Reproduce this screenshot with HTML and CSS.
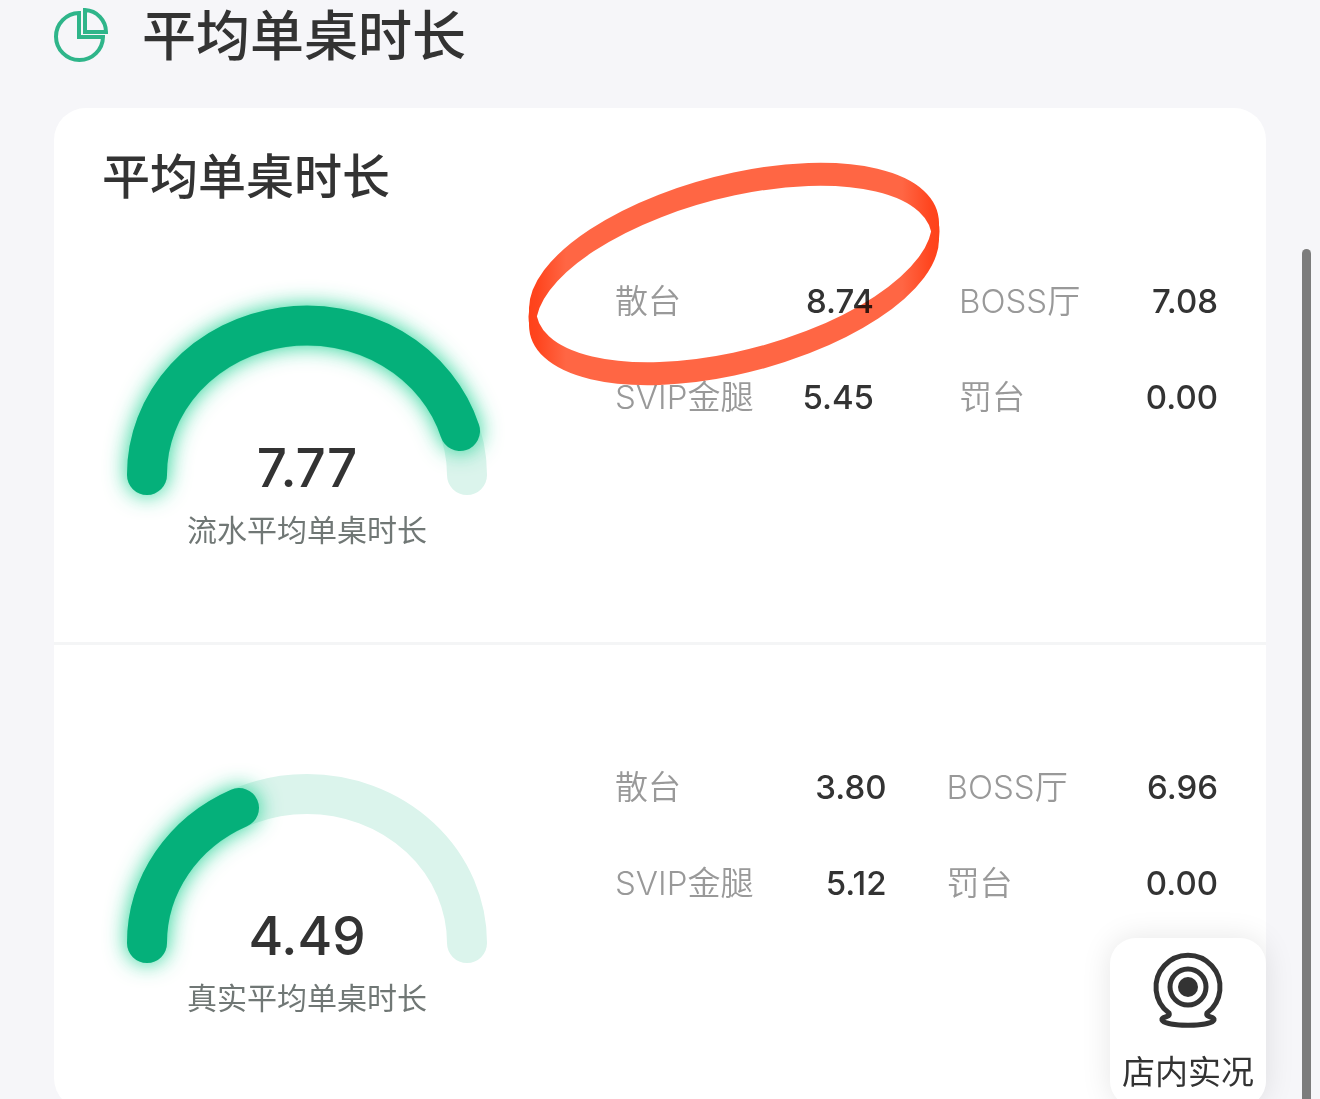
FILE: index.html
```html
<!DOCTYPE html>
<html lang="zh-CN">
<head>
    <meta charset="UTF-8">
    <meta name="viewport" content="width=device-width, initial-scale=1.0">
    <title>平均单桌时长</title>
    <link rel="stylesheet" href="styles.css">
</head>
<body>
    <header class="page-header">
        <svg class="pie-icon" viewBox="0 0 54 54" aria-hidden="true">
            <path d="M25 5A23.500 23.500 0 1 0 49 29H25Z"/>
            <path d="M31 2V24H52A22 22 0 0 0 31 2Z"/>
        </svg>
        <h1>平均单桌时长</h1>
    </header>

    <main class="card">
        <h2>平均单桌时长</h2>

        <!-- Billed time -->
        <section class="panel first">
            <div class="gauge">
                <svg viewBox="0 0 360 188" aria-hidden="true">
                    <path class="track" d="M20 169A160 149 0 0 1 340 169"/>
                    <path class="progress" d="M20 169A160 149 0 0 1 333 125"/>
                </svg>
                <strong>7.77</strong>
                <span>流水平均单桌时长</span>
            </div>
            <dl class="metrics">
                <div><dt>散台</dt><dd>8.74</dd></div>
                <div><dt>BOSS厅</dt><dd>7.08</dd></div>
                <div><dt>SVIP金腿</dt><dd>5.45</dd></div>
                <div><dt>罚台</dt><dd>0.00</dd></div>
            </dl>
        </section>

        <!-- Real time -->
        <section class="panel second">
            <div class="gauge">
                <svg viewBox="0 0 360 188" aria-hidden="true">
                    <path class="track" d="M20 169A160 149 0 0 1 340 169"/>
                    <path class="progress" d="M20 169A160 149 0 0 1 112 34"/>
                </svg>
                <strong>4.49</strong>
                <span>真实平均单桌时长</span>
            </div>
            <dl class="metrics">
                <div><dt>散台</dt><dd>3.80</dd></div>
                <div><dt>BOSS厅</dt><dd>6.96</dd></div>
                <div><dt>SVIP金腿</dt><dd>5.12</dd></div>
                <div><dt>罚台</dt><dd>0.00</dd></div>
            </dl>
        </section>

        <!-- Marker ring -->
        <svg class="marker" viewBox="0 0 420 234" aria-hidden="true">
            <defs>
                <linearGradient id="ink" gradientUnits="userSpaceOnUse" x1="5" y1="0" x2="415" y2="0">
                    <stop offset="0" stop-color="#ff4219"/>
                    <stop offset="0.02" stop-color="#ff451e"/>
                    <stop offset="0.09" stop-color="#ff6644"/>
                    <stop offset="0.91" stop-color="#ff6644"/>
                    <stop offset="0.98" stop-color="#ff451e"/>
                    <stop offset="1" stop-color="#ff4219"/>
                </linearGradient>
            </defs>
            <path fill="url(#ink)" stroke="url(#ink)" stroke-width="7" fill-rule="evenodd" d="M8.500 150.600A206.500 87.500 -14.650 0 1 411.500 65.400A206.500 87.500 -14.650 0 1 8.500 150.600ZM8.500 166.600A206.500 87.500 -14.650 0 1 411.500 81.400A206.500 87.500 -14.650 0 1 8.500 166.600Z"/>
            <path fill="none" stroke="url(#ink)" stroke-width="8" d="M8.500 158.600A206.500 87.500 -14.650 0 1 411.500 73.400A206.500 87.500 -14.650 0 1 8.500 158.600Z"/>
        </svg>
    </main>

    <button class="live" type="button">
        <svg viewBox="0 0 72 76" aria-hidden="true">
            <path d="M17 61A32 32 0 1 1 55 61C53 66 63 64 62 68C59 75 13 75 10 68C9 64 19 66 17 61Z"/>
            <circle cx="36" cy="35" r="18"/>
            <circle class="lens" cx="36" cy="35" r="10"/>
        </svg>
        店内实况
    </button>
    <div class="scroll-thumb"></div>
</body>
</html>
```
FILE: styles.css
```css
html {
    scrollbar-width: none;
}
body {
    margin: 0;
    padding: 0 54px;
    background-color: #f6f6f9;
    color: #333;
    font-family: Inter, "Noto Sans CJK SC", sans-serif;
}
h1, h2, dl, dd {
    margin: 0;
}
.page-header {
    display: flex;
    align-items: center;
    gap: 34px;
    height: 70px;
    margin-bottom: 38px;
}
.page-header h1 {
    font-size: 54px;
    line-height: 74px;
    font-weight: 500;
    padding-top: 4px;
}
.pie-icon {
    width: 54px;
    height: 54px;
    fill: none;
    stroke: #2fb58a;
    stroke-width: 4;
}
.card {
    position: relative;
    padding-top: 33px;
    background-color: #fff;
    border-radius: 32px;
}
.card h2 {
    padding: 0 48px;
    font-size: 48px;
    line-height: 72px;
    font-weight: 500;
}
.panel {
    display: grid;
    grid-template-columns: 360px 1fr;
    column-gap: 128px;
    padding: 0 48px 92px 73px;
}
.panel.second {
    border-top: 3px solid #f4f5f6;
}
.gauge {
    display: flex;
    flex-direction: column;
    align-items: center;
}
.first .gauge {
    padding-top: 93px;
}
.second .gauge {
    padding-top: 129px;
}
.gauge svg {
    width: 360px;
    height: 188px;
    overflow: visible;
    fill: none;
    stroke-width: 40px;
    stroke-linecap: round;
}
.track {
    stroke: #dbf4ec;
}
.progress {
    stroke: #05b07a;
    filter: drop-shadow(0 0 11px rgba(5, 205, 135, 0.9));
}
.gauge strong {
    margin-top: -56px;
    font-size: 53px;
    line-height: 60px;
    font-weight: 500;
}
.gauge span {
    margin-top: 12px;
    color: #707775;
    font-size: 30px;
    line-height: 40px;
}
.metrics {
    display: grid;
    grid-template-columns: 1fr 1fr;
    align-content: start;
    row-gap: 48px;
}
.first .metrics {
    padding-top: 64px;
    column-gap: 85px;
}
.second .metrics {
    padding-top: 118px;
    column-gap: 60px;
}
.metrics div {
    display: flex;
    justify-content: space-between;
    font-size: 33px;
    line-height: 48px;
}
.metrics dt {
    color: #999;
    font-weight: 350;
    white-space: nowrap;
}
.metrics dd {
    font-weight: 500;
}
.marker {
    position: absolute;
    top: 50px;
    left: 470px;
    width: 420px;
    height: 234px;
    mix-blend-mode: multiply;
    pointer-events: none;
}
.live {
    position: fixed;
    right: 54px;
    bottom: -8px;
    display: flex;
    flex-direction: column;
    align-items: center;
    gap: 20px;
    width: 156px;
    padding: 14px 0 11px;
    border: none;
    border-radius: 26px;
    background-color: #fff;
    box-shadow: 0 0 30px rgba(0, 0, 0, 0.1);
    color: #333;
    font-family: inherit;
    font-size: 33px;
    line-height: 48px;
    cursor: pointer;
}
.live svg {
    width: 72px;
    height: 76px;
    fill: none;
    stroke: #333;
    stroke-width: 5;
}
.live .lens {
    fill: #333;
    stroke: none;
}
.scroll-thumb {
    position: fixed;
    top: 249px;
    right: 9px;
    bottom: 0;
    width: 9px;
    border-radius: 5px 5px 0 0;
    background-color: #7c7c7c;
}
```
